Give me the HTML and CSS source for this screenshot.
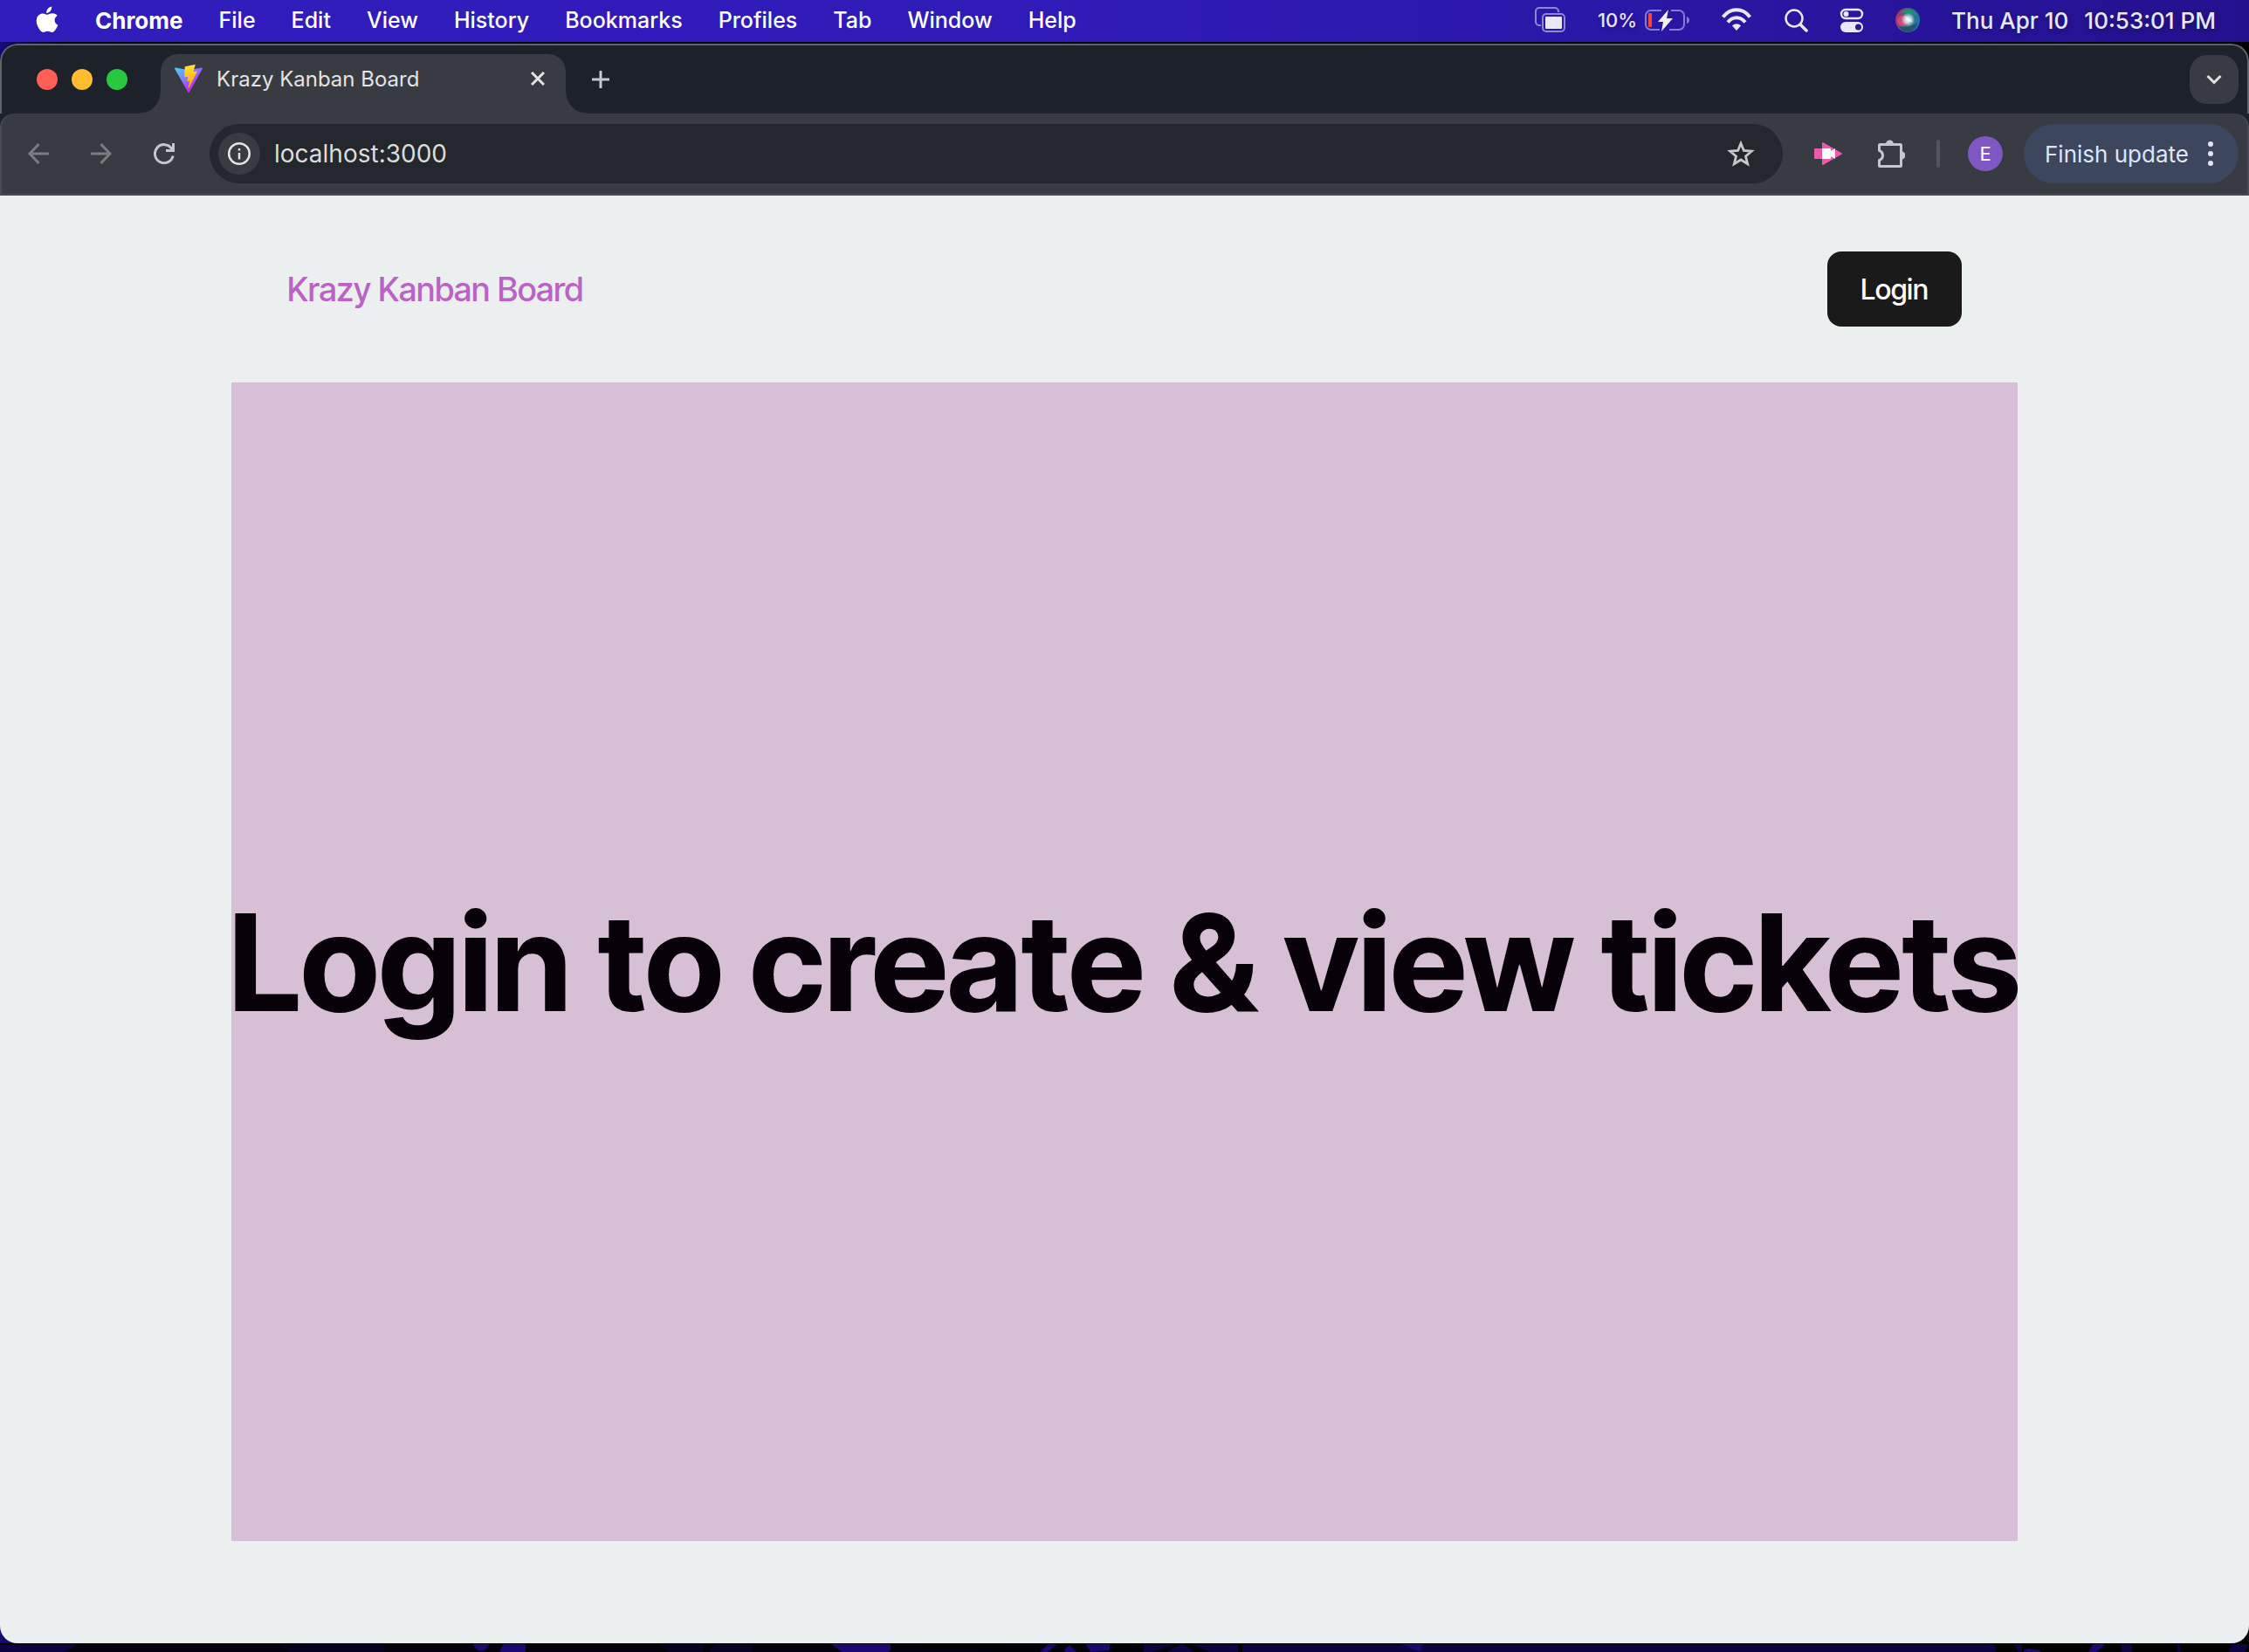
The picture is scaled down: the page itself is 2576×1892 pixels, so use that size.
FILE: index.html
```html
<!DOCTYPE html>
<html lang="en">
<head>
<meta charset="utf-8">
<meta name="viewport" content="width=device-width, initial-scale=1">
<title>Krazy Kanban Board</title>
<link rel="stylesheet" href="styles.css">
</head>
<body>
<div class="desktop">
  <header class="menubar">
    <nav class="menus" aria-label="Menu bar">
      <button class="menu-item" type="button" aria-label="Apple menu">
        <svg class="apple" width="28" height="32" viewBox="0 0 28 32" fill="#fff"><path d="M19.3 0.5c.2 2-.6 3.900-1.700 5.200-1.200 1.400-2.900 2.300-4.500 2.200-.2-1.900.7-3.800 1.700-5C16 1.600 17.900.6 19.300.5z"/><path d="M25.700 11.100c-2 1.200-3.100 3-3.100 5.100 0 2.500 1.500 4.600 3.700 5.500-.5 1.500-1.200 2.900-2.100 4.200-1.300 1.900-2.600 4-4.700 4-2 0-2.600-1.200-5-1.200s-3 1.200-5 1.200c-2 0-3.400-1.900-4.700-3.900C2.200 22.200 1 17.600 2.100 14c.9-3.300 3.700-5.600 6.900-5.600 2.100 0 3.900 1.400 5.200 1.400 1.200 0 3.300-1.600 5.900-1.500 2.300.1 4.400 1 5.600 2.800z"/></svg>
      </button>
      <button class="menu-item menu-app" type="button">Chrome</button>
      <button class="menu-item" type="button">File</button>
      <button class="menu-item" type="button">Edit</button>
      <button class="menu-item" type="button">View</button>
      <button class="menu-item" type="button">History</button>
      <button class="menu-item" type="button">Bookmarks</button>
      <button class="menu-item" type="button">Profiles</button>
      <button class="menu-item" type="button">Tab</button>
      <button class="menu-item" type="button">Window</button>
      <button class="menu-item" type="button">Help</button>
    </nav>
    <div class="status">
      <svg width="36" height="30" viewBox="0 0 36 30" fill="none"><path d="M7 21H5a4 4 0 0 1-4-4V5a4 4 0 0 1 4-4h18a4 4 0 0 1 4 4v1" stroke="#8f86d6" stroke-width="2"/><rect x="9" y="8" width="25" height="20" rx="4" stroke="#8f86d6" stroke-width="2"/><rect x="12" y="11" width="19" height="14" rx="1" fill="#eae7f8"/></svg>
      <div class="battery"><span class="battery-level">10%</span>
        <svg width="52" height="28" viewBox="0 0 52 28" fill="none"><path d="M20 3H8a6 6 0 0 0-6 6v10a6 6 0 0 0 6 6h10M31 3h9a6 6 0 0 1 6 6v10a6 6 0 0 1-6 6H29" stroke="#857bd2" stroke-width="2"/><path d="M49 10v8q3-1 3-4t-3-4z" fill="#857bd2"/><rect x="5" y="6" width="4" height="16" rx="1" fill="#ff453a"/><path d="M28 2 16 16h6l-2 11 13-15h-7z" fill="#f3f1fb"/></svg>
      </div>
      <svg width="36" height="28" viewBox="0 0 36 28" fill="none" stroke="#eae7f8" stroke-width="4"><path d="M2.500 10.500C11-.5 25-.5 33.500 10.500"/><path d="M8 16.500c5.500-7 14.500-7 20 0"/><path d="m18 26-5-5.500c3-3 7-3 10 0z" fill="#eae7f8" stroke="none"/></svg>
      <svg width="28" height="28" viewBox="0 0 28 28" fill="none" stroke="#eae7f8"><circle cx="12" cy="12" r="9.500" stroke-width="2.500"/><path d="m19 19 7 7" stroke-width="3.500" stroke-linecap="round"/></svg>
      <svg width="28" height="28" viewBox="0 0 28 28"><rect x="2" y="2" width="24" height="10" rx="5" fill="none" stroke="#eae7f8" stroke-width="2.400"/><circle cx="7.500" cy="7" r="3" fill="#eae7f8"/><rect x="1" y="16" width="26" height="12" rx="6" fill="#eae7f8"/><circle cx="21.500" cy="22" r="3.500" fill="#2a18a0"/></svg>
      <svg width="28" height="28" viewBox="0 0 28 28"><defs><linearGradient id="siri" x1="0" y1=".3" x2="1" y2=".6"><stop offset="0" stop-color="#c0265c"/><stop offset=".45" stop-color="#3d6f7b"/><stop offset="1" stop-color="#1577a8"/></linearGradient><radialGradient id="glow"><stop offset="0" stop-color="#fff"/><stop offset=".4" stop-color="#e7fbff" stop-opacity=".8"/><stop offset="1" stop-color="#fff" stop-opacity="0"/></radialGradient></defs><circle cx="14" cy="14" r="14" fill="url(#siri)"/><path d="M7 5c5-5 15-3 18 4-7-4-11-2-18-4z" fill="#159c74"/><path d="M4 21c5 2 15 1 21-4-2 12-16 14-21 4z" fill="#27506f"/><circle cx="8" cy="15" r="6" fill="#e94783" opacity=".7"/><circle cx="14.500" cy="13.500" r="8" fill="url(#glow)"/><path d="m10 9 10 7-5-1z" fill="#fff"/></svg>
      <time class="clock"><span>Thu Apr 10</span><span>10:53:01 PM</span></time>
    </div>
  </header>

  <div class="window">
    <div class="tabstrip">
      <div class="lights">
        <button class="light light-close" type="button" aria-label="Close window"></button>
        <button class="light light-min" type="button" aria-label="Minimize window"></button>
        <button class="light light-max" type="button" aria-label="Zoom window"></button>
      </div>
      <div class="tab">
        <svg width="32" height="32" viewBox="0 0 256 257"><defs><linearGradient id="va" x1="-.8%" x2="57.600%" y1="7.700%" y2="78.400%"><stop offset="0" stop-color="#41d1ff"/><stop offset="1" stop-color="#bd34fe"/></linearGradient><linearGradient id="vb" x1="43.400%" x2="50.300%" y1="2.200%" y2="89%"><stop offset="0" stop-color="#ffea83"/><stop offset=".083" stop-color="#ffdd35"/><stop offset="1" stop-color="#ffa800"/></linearGradient></defs><path fill="url(#va)" d="M255.153 37.938 134.897 252.976c-2.483 4.440-8.862 4.466-11.382.048L.875 37.958c-2.746-4.814 1.371-10.646 6.827-9.670l120.385 21.517a6.537 6.537 0 0 0 2.322-.004l117.867-21.483c5.438-.991 9.574 4.796 6.877 9.620Z"/><path fill="url(#vb)" d="M185.432.063 96.440 17.501a3.268 3.268 0 0 0-2.634 3.014l-5.474 92.456a3.268 3.268 0 0 0 3.997 3.378l24.777-5.718c2.318-.535 4.413 1.507 3.936 3.838l-7.361 36.047c-.495 2.426 1.782 4.500 4.151 3.780l15.304-4.649c2.372-.720 4.652 1.360 4.150 3.788l-11.698 56.621c-.732 3.542 3.979 5.473 5.943 2.437l1.313-2.028 72.516-144.720c1.215-2.423-.880-5.186-3.540-4.672l-25.505 4.922c-2.396.462-4.435-1.770-3.759-4.114l16.646-57.705c.677-2.350-1.370-4.583-3.769-4.113Z"/></svg>
        <span class="tab-title">Krazy Kanban Board</span>
        <button class="icon-btn" type="button" aria-label="Close tab"><svg width="16" height="16" viewBox="0 0 16 16" stroke="#e3e3e3" stroke-width="3"><path d="m1 1 14 14M15 1 1 15"/></svg></button>
      </div>
      <button class="icon-btn new-tab" type="button" aria-label="New tab"><svg width="20" height="20" viewBox="0 0 20 20" stroke="#c4c7ce" stroke-width="3"><path d="M10 0v20M0 10h20"/></svg></button>
      <button class="tab-search" type="button" aria-label="Search tabs"><svg width="18" height="12" viewBox="0 0 18 12" fill="none" stroke="#e3e3e3" stroke-width="3"><path d="m1.500 2 7.500 7.500L16.500 2"/></svg></button>
    </div>

    <div class="toolbar">
      <div class="nav-buttons">
        <button class="icon-btn" type="button" aria-label="Back"><svg width="24" height="24" viewBox="0 0 24 24" fill="none" stroke="#7a7c82" stroke-width="3"><path d="M24 12H2M12.500 1 2 12l10.500 11"/></svg></button>
        <button class="icon-btn" type="button" aria-label="Forward"><svg width="24" height="24" viewBox="0 0 24 24" fill="none" stroke="#7a7c82" stroke-width="3"><path d="M0 12h22M11.500 1 22 12 11.500 23"/></svg></button>
        <button class="icon-btn" type="button" aria-label="Reload"><svg width="24" height="24" viewBox="0 0 24 24" fill="none" stroke="#c4c7ce" stroke-width="3"><path d="M22.200 14.500A10.500 10.500 0 1 1 20.500 6l1 2"/><path d="M22.500 0v8.500H14"/></svg></button>
      </div>
      <div class="omnibox">
        <button class="site-info" type="button" aria-label="View site information"><svg width="28" height="28" viewBox="0 0 28 28" fill="none" stroke="#e3e3e3" stroke-width="2.500"><circle cx="14" cy="14" r="11.800"/><path d="M14 13v7.500M14 8v2.500"/></svg></button>
        <input class="url" type="text" value="localhost:3000" aria-label="Address">
        <button class="icon-btn" type="button" aria-label="Bookmark this tab"><svg width="32" height="30" viewBox="0 0 32 30" fill="none" stroke="#c7c7c7" stroke-width="2.800"><path d="m16 3.200 3.400 8.300 8.900.7-6.800 5.800 2.200 8.700-7.700-4.700-7.700 4.700 2.200-8.700-6.800-5.800 8.900-.7z"/></svg></button>
      </div>
      <div class="actions">
        <button class="icon-btn" type="button" aria-label="Screen recorder"><svg width="32" height="28" viewBox="0 0 32 28"><path d="M0 9q0-1 1-1h8V2q0-1.500 1.500-.8L31 13q1.500 1 0 2L10.500 26.800Q9 27.500 9 26v-6H1q-1 0-1-1z" fill="#ef57ad"/><path d="M9 8h9q1 0 1 1v2l5-3v12l-5-3v2q0 1-1 1H9z" fill="#fff"/></svg></button>
        <button class="icon-btn" type="button" aria-label="Extensions"><svg width="32" height="32" viewBox="0 0 32 32"><path d="M3.500 5.500h23q1 0 1 1v23q0 1-1 1h-23q-1 0-1-1v-5.800q4-1.700 4-5.700t-4-5.700V6.500q0-1 1-1z" fill="none" stroke="#c4c7ce" stroke-width="3"/><path d="M10 5a4.500 4.500 0 0 1 9 0zM28 13.500a4.500 4.500 0 0 1 0 9z" fill="#c4c7ce"/></svg></button>
        <span class="divider"></span>
        <button class="avatar" type="button" aria-label="Profile E">E</button>
        <button class="update" type="button"><span>Finish update</span><svg width="8" height="28" viewBox="0 0 8 28" fill="#dfe5f2"><circle cx="4" cy="3" r="3"/><circle cx="4" cy="14" r="3"/><circle cx="4" cy="25" r="3"/></svg></button>
      </div>
    </div>

    <div class="page">
      <div class="app">
        <nav class="navbar">
          <a class="brand" href="#">Krazy Kanban Board</a>
          <button class="login" type="button">Login</button>
        </nav>
        <main class="board">
          <h1 class="notice">Login to create &amp; view tickets</h1>
        </main>
      </div>
    </div>
  </div>

  <svg class="wallpaper" viewBox="0 0 2576 10" preserveAspectRatio="none" aria-hidden="true"><path d="M0 0h90L74 10H0z" fill="#0d0340"/><path d="M320 0h120v10H330zM755 0h50v10h-40z" fill="#07021f"/><path d="M540 0h22l-7 8q-6 2-9-1zM577 0h25v10h-30zM951 0h69v8l-3 2h-53zM1202 0h10l-12 10h-9zM1243 0h28v8l-22 2zM1219 8l6-6 8 8h-12z" fill="#1d0873"/><path d="M820 0h42v10h-50z" fill="#080223"/><path d="M1310 0h40l-30 10h-10zM1354 0l14 10h-32zM1362 0h56v10h-32zM1423 0h863v10h-863z" fill="#0d0340"/><path d="M1602 0h28l-3 9-8-2zM2318 9q2-5 18-1l2 2h-20zM2398 0h15l-12 10h-9z" fill="#1d0873"/><path d="M1440 0h7l-4 10h-7zM2306 0h10v10h-4zM2430 0h12v10h-12zM2494 0h3v10h-3zM2556 0h20l-5 10h-18z" fill="#0d0340"/><path d="M0 0h2576v1H0z"/></svg>
</div>
</body>
</html>
```
FILE: styles.css
```css
* {
  box-sizing: border-box;
}

body {
  margin: 0;
  background: #000;
  font-family: Inter, "Liberation Sans", sans-serif;
}

button,
input {
  margin: 0;
  padding: 0;
  border: 0;
  background: none;
  color: inherit;
  font: inherit;
}

svg {
  display: block;
  flex: none;
}

.desktop {
  display: flex;
  flex-direction: column;
  min-height: 100vh;
  background: linear-gradient(90deg, #170a78, #05010f 3%, #000 97%);
}

/* Menu bar */
.menubar {
  display: flex;
  align-items: center;
  justify-content: space-between;
  height: 48px;
  padding: 0 38px 2px 40px;
  background: linear-gradient(90deg, #311cbd, #301bb9 45%, #2a18a8 70%, #24118e);
  color: #fff;
  font-size: 25px;
  font-weight: 500;
  white-space: nowrap;
  text-shadow: 0 3px 6px rgb(0 0 0 / 30%);
}

.menus {
  display: flex;
  align-items: center;
  gap: 41px;
}

.menu-app {
  font-size: 26px;
  font-weight: 700;
}

.status {
  display: flex;
  align-items: center;
  gap: 36px;
  color: #eae7f8;
}

.battery {
  display: flex;
  align-items: center;
  gap: 8px;
}

.battery-level {
  font-size: 22px;
}

.clock {
  display: flex;
  gap: 18px;
  font-size: 26px;
}

/* Browser window */
.window {
  display: flex;
  flex: 1;
  flex-direction: column;
  margin-top: 2px;
  border-radius: 20px;
  background: #1d2129;
  overflow: hidden;
}

.tabstrip {
  display: flex;
  align-items: center;
  height: 80px;
  padding: 0 10px 0 40px;
  border: 2px solid #5f6468;
  border-bottom: 0;
  border-radius: 20px 20px 0 0;
  background: #1d2129;
}

.lights {
  display: flex;
  gap: 16px;
}

.light {
  width: 24px;
  height: 24px;
  border-radius: 50%;
}

.light-close {
  background: #ff5f57;
}

.light-min {
  background: #febc2e;
}

.light-max {
  background: #28c840;
}

.tab {
  position: relative;
  display: flex;
  align-items: center;
  align-self: flex-end;
  width: 464px;
  height: 68px;
  margin-left: 38px;
  padding: 0 24px 12px 16px;
  border-radius: 20px 20px 0 0;
  background: #393b43;
}

.tab::before,
.tab::after {
  content: "";
  position: absolute;
  bottom: 0;
  width: 24px;
  height: 24px;
}

.tab::before {
  right: 100%;
  background: radial-gradient(circle at 0 0, transparent 23px, #393b43 24px);
}

.tab::after {
  left: 100%;
  background: radial-gradient(circle at 100% 0, transparent 23px, #393b43 24px);
}

.tab-title {
  flex: 1;
  margin-left: 16px;
  color: #e3e3e3;
  font-size: 24px;
}

.icon-btn {
  display: flex;
  align-items: center;
  justify-content: center;
}

.new-tab {
  margin-left: 30px;
}

.tab-search {
  display: flex;
  align-items: center;
  justify-content: center;
  width: 56px;
  height: 56px;
  margin-left: auto;
  border-radius: 20px;
  background: #393b43;
}

.toolbar {
  display: flex;
  align-items: center;
  height: 94px;
  padding: 0 10px 0 30px;
  border: 2px solid #494b52;
  border-top: 0;
  border-radius: 16px 16px 0 0;
  background: #393b43;
}

.nav-buttons {
  display: flex;
  gap: 48px;
}

.omnibox {
  display: flex;
  flex: 1;
  align-items: center;
  height: 68px;
  margin-left: 40px;
  padding: 0 32px 0 10px;
  border-radius: 34px;
  background: #24272e;
}

.site-info {
  display: flex;
  align-items: center;
  justify-content: center;
  width: 48px;
  height: 48px;
  border-radius: 50%;
  background: #393b43;
}

.url {
  flex: 1;
  min-width: 0;
  margin-left: 16px;
  outline: 0;
  color: #dcdcdc;
  font-size: 28px;
}

.actions {
  display: flex;
  align-items: center;
  margin-left: 36px;
}

.actions .icon-btn {
  margin-right: 40px;
}

.divider {
  width: 4px;
  height: 32px;
  margin-left: -4px;
  border-radius: 2px;
  background: #52555e;
}

.avatar {
  width: 40px;
  height: 40px;
  margin: 0 24px 0 32px;
  border-radius: 50%;
  background: #7e57c2;
  color: #fff;
  font-size: 22px;
}

.update {
  display: flex;
  align-items: center;
  justify-content: space-between;
  width: 246px;
  height: 68px;
  padding: 0 28px 0 24px;
  border-radius: 34px;
  background: #3c475e;
  color: #dfe5f2;
  font-size: 26px;
  white-space: nowrap;
}

/* Page */
.page {
  display: flex;
  flex: 1;
  justify-content: center;
  padding-bottom: 117px;
  background: #ebeff0;
  font-family: "Inter Tight", Inter, "Liberation Sans", sans-serif;
}

.app {
  display: flex;
  flex: 1;
  flex-direction: column;
  max-width: 2046px;
}

.navbar {
  display: flex;
  align-items: center;
  justify-content: space-between;
  padding: 64px;
}

.brand {
  color: #ba62c6;
  font-size: 38px;
  font-weight: 500;
  text-decoration: none;
}

.login {
  width: 154px;
  height: 86px;
  border-radius: 16px;
  background: #1a1a1a;
  color: #fff;
  font-size: 32px;
  font-weight: 500;
}

.board {
  display: flex;
  flex: 1;
  align-items: center;
  justify-content: center;
  background: #d7bfd5;
}

.notice {
  margin: 0;
  color: #070008;
  font-size: 154px;
  font-weight: 700;
  line-height: 1;
  white-space: nowrap;
}

.wallpaper {
  width: 100%;
  height: 10px;
}
```
